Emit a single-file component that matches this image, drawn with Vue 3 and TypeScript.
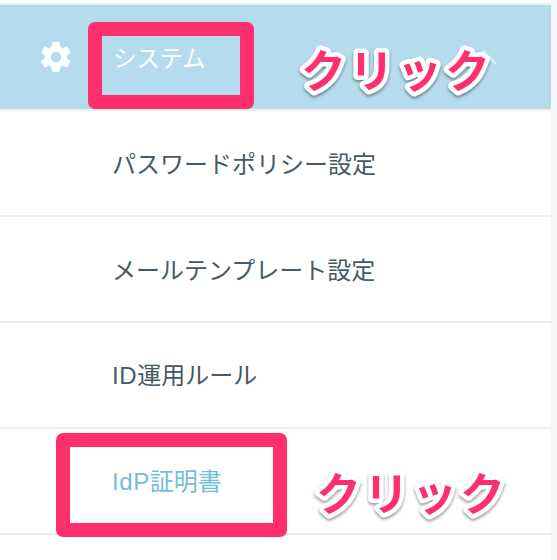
<script setup lang="ts">
interface MenuItem {
  latin: string
  label: string
  active?: boolean
}

const items: MenuItem[] = [
  { latin: '', label: 'パスワードポリシー設定' },
  { latin: '', label: 'メールテンプレート設定' },
  { latin: 'ID', label: '運用ルール' },
  { latin: 'IdP', label: '証明書', active: true },
]
</script>

<template>
  <div class="page">
    <nav class="menu">
      <div class="heading">
        <svg class="gear" viewBox="0 0 24 24" aria-hidden="true">
          <path
            fill="#fff"
            fill-rule="evenodd"
            d="M19.4 13a7.8 7.8 0 0 0 0-2l2.1-1.6a.5.5 0 0 0 .1-.7l-2-3.4a.5.5 0 0 0-.6-.2l-2.5 1a7.4 7.4 0 0 0-1.7-1l-.4-2.6a.5.5 0 0 0-.5-.5h-4a.5.5 0 0 0-.5.5l-.4 2.6a7.7 7.7 0 0 0-1.7 1l-2.5-1a.5.5 0 0 0-.6.2l-2 3.4a.5.5 0 0 0 .1.7L4.5 11a7.8 7.8 0 0 0 0 2l-2.2 1.6a.5.5 0 0 0-.1.7l2 3.4a.5.5 0 0 0 .6.2l2.5-1a7.4 7.4 0 0 0 1.7 1l.4 2.6a.5.5 0 0 0 .5.5h4a.5.5 0 0 0 .5-.5l.4-2.6a7.7 7.7 0 0 0 1.7-1l2.5 1a.5.5 0 0 0 .6-.2l2-3.4a.5.5 0 0 0-.1-.7zM12 15.5a3.5 3.5 0 1 1 0-7 3.5 3.5 0 0 1 0 7z"
          />
        </svg>
        <span class="label">システム</span>
        <svg class="chevron" viewBox="0 0 26 15" aria-hidden="true">
          <path d="M1 14 13 2l12 12" fill="none" stroke="#e4f2f8" stroke-width="2.4" />
        </svg>
      </div>
      <div v-for="item in items" :key="item.label" class="item" :class="{ active: item.active }">
        <span class="label"><span v-if="item.latin" class="latin">{{ item.latin }}</span>{{ item.label }}</span>
      </div>
    </nav>
    <div class="frame frame-system"></div>
    <div class="frame frame-cert"></div>
    <svg class="callout callout-system" viewBox="0 0 210 70"><text x="10" y="52">クリック</text></svg>
    <svg class="callout callout-cert" viewBox="0 0 210 70"><text x="10" y="52">クリック</text></svg>
  </div>
</template>

<style>
body {
  background: #f5f5f5;
}
</style>

<style scoped>
.page {
  position: relative;
  width: 557px;
  height: 560px;
  overflow: hidden;
  background: #f5f5f5;
  font-family: "Noto Sans CJK JP", sans-serif;
}
.menu {
  box-sizing: border-box;
  width: 551px;
  height: 560px;
  padding-top: 3px;
  background: #fff;
}
.heading,
.item {
  box-sizing: border-box;
  display: flex;
  align-items: center;
  height: 106px;
  border-bottom: 2px solid #eee;
  font-size: 24px;
  line-height: 36px;
  color: #455a64;
}
.item {
  padding-left: 112px;
}
.heading {
  height: 108px;
  padding: 0 54px 0 38px;
  border-top: 2px solid #eee;
  background: #b5dcec;
  color: #fff;
}
.heading .label {
  font-size: 23.5px;
  letter-spacing: -0.3px;
}
.gear {
  width: 36px;
  height: 36px;
  margin-right: 39px;
}
.chevron {
  width: 26px;
  height: 15px;
  margin-left: auto;
}
.item.active {
  color: #70bedc;
}
.label {
  white-space: nowrap;
}
.latin {
  font-family: "Liberation Sans", sans-serif;
  letter-spacing: 0.6px;
}
.frame {
  position: absolute;
  box-sizing: border-box;
  border: 14px solid #ff2f6d;
  border-radius: 7px;
}
.frame-system {
  left: 88px;
  top: 22px;
  width: 166px;
  height: 87px;
}
.frame-cert {
  left: 56px;
  top: 433px;
  width: 231px;
  height: 104px;
}
.callout {
  position: absolute;
  width: 210px;
  height: 70px;
  font-size: 45px;
  font-weight: 700;
  letter-spacing: 3px;
  filter: drop-shadow(0 2px 1.5px rgba(0, 0, 0, 0.4));
}
.callout text {
  fill: #ff2f6d;
  stroke: #fff;
  stroke-width: 9px;
  stroke-linejoin: round;
  paint-order: stroke fill;
}
.callout-system {
  left: 291px;
  top: 36px;
}
.callout-cert {
  left: 306px;
  top: 459px;
}
</style>
